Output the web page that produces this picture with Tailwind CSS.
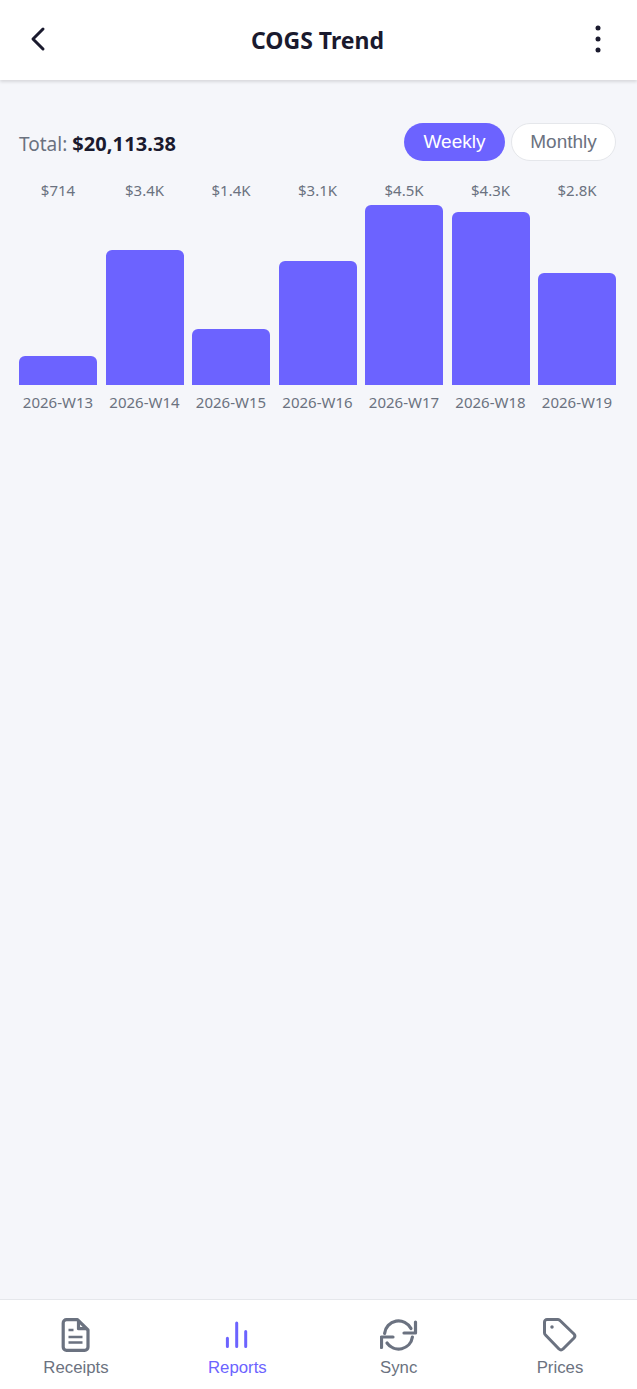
<!DOCTYPE html>
<html lang="en">
<head>
    <meta charset="UTF-8">
    <meta name="viewport" content="width=device-width, initial-scale=1.0">
    <title>COGS Trend</title>
    <script src="https://cdn.jsdelivr.net/npm/@tailwindcss/browser@4"></script>
</head>
<body class="bg-[#f5f6fa] font-['Noto_Sans',sans-serif]">
    <div class="flex flex-col h-[1389px]">
        <!-- header -->
        <header class="h-20 shrink-0 bg-white shadow-[0_2px_3px_rgba(0,0,0,0.12)] flex items-center justify-between pl-[24px] pr-[28px]">
            <svg class="w-[28px] h-[28px] -mt-[3px]" viewBox="0 0 28 28" fill="none">
                <path d="M19 4 L9 14 L19 24" stroke="#1a1a2e" stroke-width="3" stroke-linecap="round" stroke-linejoin="round"/>
            </svg>
            <h1 class="text-[23px] font-bold text-[#1a1a2e]">COGS Trend</h1>
            <svg class="w-[26px] h-[32px] -mt-[3px]" viewBox="0 0 26 32" fill="#1a1a2e">
                <circle cx="15" cy="5" r="2.5"/>
                <circle cx="15" cy="16" r="2.5"/>
                <circle cx="15" cy="27" r="2.5"/>
            </svg>
        </header>

        <main class="flex-1 pl-[19px] pr-[21px] pt-[43px]">
            <div class="flex items-center justify-between h-[38px]">
                <p class="text-[19px] text-[#6b7280] mt-[3px]">Total: <span class="text-[20px] tracking-[0.1px] font-bold text-[#1a1a2e]">$20,113.38</span></p>
                <div class="flex gap-[6px] font-['Liberation_Sans',sans-serif] text-[19px]">
                    <button class="w-[101px] h-[38px] rounded-full bg-[#6c63ff] text-white">Weekly</button>
                    <button class="w-[105px] h-[38px] rounded-full bg-white border border-[#e5e7eb] text-[#6b7280]">Monthly</button>
                </div>
            </div>

            <div class="grid grid-cols-7 gap-x-[8.5px] h-[204px] mt-[20px] text-center text-[15px] leading-[20px] text-[#6b7280]">
                <div class="flex flex-col justify-between">
                    <span class="-mt-px">$714</span>
                    <div class="h-[29px] bg-[#6c63ff] rounded-t-[6px]"></div>
                </div>
                <div class="flex flex-col justify-between">
                    <span class="-mt-px">$3.4K</span>
                    <div class="h-[135px] bg-[#6c63ff] rounded-t-[6px]"></div>
                </div>
                <div class="flex flex-col justify-between">
                    <span class="-mt-px">$1.4K</span>
                    <div class="h-[56px] bg-[#6c63ff] rounded-t-[6px]"></div>
                </div>
                <div class="flex flex-col justify-between">
                    <span class="-mt-px">$3.1K</span>
                    <div class="h-[124px] bg-[#6c63ff] rounded-t-[6px]"></div>
                </div>
                <div class="flex flex-col justify-between">
                    <span class="-mt-px">$4.5K</span>
                    <div class="h-[180px] bg-[#6c63ff] rounded-t-[6px]"></div>
                </div>
                <div class="flex flex-col justify-between">
                    <span class="-mt-px">$4.3K</span>
                    <div class="h-[173px] bg-[#6c63ff] rounded-t-[6px]"></div>
                </div>
                <div class="flex flex-col justify-between">
                    <span class="-mt-px">$2.8K</span>
                    <div class="h-[112px] bg-[#6c63ff] rounded-t-[6px]"></div>
                </div>
            </div>
            <div class="grid grid-cols-7 gap-x-[8.5px] mt-[7px] text-center text-[15px] leading-[20px] text-[#6b7280] whitespace-nowrap">
                <span>2026-W13</span>
                <span>2026-W14</span>
                <span>2026-W15</span>
                <span>2026-W16</span>
                <span>2026-W17</span>
                <span>2026-W18</span>
                <span>2026-W19</span>
            </div>
        </main>

        <!-- bottom nav -->
        <nav class="h-[90px] shrink-0 bg-white border-t border-[#e5e7eb] flex justify-between pl-[26px] pr-[27px] pt-[18px] font-['Liberation_Sans',sans-serif] text-[16.8px] leading-[18px] text-[#6b7280]">
            <div class="w-[100px] flex flex-col items-center gap-[7px]">
                <svg class="w-[34px] h-[34px]" viewBox="0 0 34 34" fill="none" stroke="#6b7280" stroke-width="3.2" stroke-linejoin="round">
                    <path d="M7.5 1.7 H18.5 L29 12 V29 A3.3 3.3 0 0 1 25.7 32.3 H7.5 A3.3 3.3 0 0 1 4.2 29 V5 A3.3 3.3 0 0 1 7.5 1.7 Z"/>
                    <path d="M19.5 2.5 V10.7 H28"/>
                    <path stroke-width="2.6" d="M9.5 12 H14.5 M9.5 19 H23.5 M9.5 24.5 H23.5"/>
                </svg>
                <span>Receipts</span>
            </div>
            <div class="w-[100px] flex flex-col items-center gap-[7px] text-[#6c63ff]">
                <svg class="w-[34px] h-[34px]" viewBox="0 0 34 34" fill="none" stroke="#6c63ff" stroke-width="3" stroke-linecap="round">
                    <path d="M7.4 20.2 V28.5 M16.7 5 V28.5 M25.7 13.5 V28.5"/>
                </svg>
                <span>Reports</span>
            </div>
            <div class="w-[100px] flex flex-col items-center gap-[7px]">
                <svg class="w-[38px] h-[34px]" viewBox="0 0 38 34" fill="none" stroke="#6b7280" stroke-width="3.2" stroke-linecap="round" stroke-linejoin="round">
                    <path d="M4.6 15.5 A14 14 0 0 1 31 10.6"/>
                    <path d="M35.5 4 V15 H24"/>
                    <path d="M32.4 19 A14 14 0 0 1 7 25"/>
                    <path d="M1.5 29.5 V19 H13"/>
                </svg>
                <span>Sync</span>
            </div>
            <div class="w-[100px] flex flex-col items-center gap-[7px]">
                <svg class="w-[34px] h-[34px]" viewBox="0 0 34 34" fill="none" stroke="#6b7280" stroke-width="3" stroke-linecap="round" stroke-linejoin="round">
                    <path d="M4 1.5 H15 A3 3 0 0 1 17 2.5 L31 16 A3 3 0 0 1 31 20 L20 31 A3 3 0 0 1 16 31 L2.5 17 A3 3 0 0 1 1.5 15 V4 A2.5 2.5 0 0 1 4 1.5 Z"/>
                    <circle cx="9" cy="9" r="1" fill="#6b7280" stroke-width="1.5"/>
                </svg>
                <span>Prices</span>
            </div>
        </nav>
    </div>
</body>
</html>
